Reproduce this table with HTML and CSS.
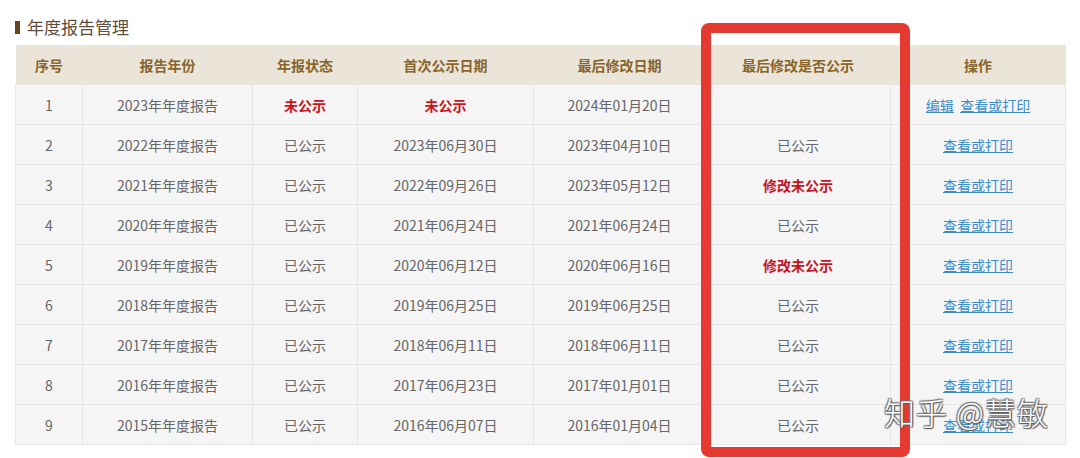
FILE: index.html
```html
<!DOCTYPE html>
<html lang="zh-CN">
<head>
<meta charset="utf-8">
<link rel="stylesheet" href="styles.css">
</head>
<body>
<div class="page">
  <h2 class="title"><span class="bar"></span>年度报告管理</h2>
  <table class="grid">
    <colgroup>
      <col style="width:67px"><col style="width:170px"><col style="width:105px"><col style="width:176px"><col style="width:172px"><col style="width:185px"><col style="width:175px">
    </colgroup>
    <thead>
      <tr><th>序号</th><th>报告年份</th><th>年报状态</th><th>首次公示日期</th><th>最后修改日期</th><th>最后修改是否公示</th><th>操作</th></tr>
    </thead>
    <tbody>
      <tr><td>1</td><td>2023年年度报告</td><td class="red">未公示</td><td class="red">未公示</td><td>2024年01月20日</td><td></td><td><a class="link">编辑</a>&nbsp; <a class="link">查看或打印</a></td></tr>
      <tr><td>2</td><td>2022年年度报告</td><td>已公示</td><td>2023年06月30日</td><td>2023年04月10日</td><td>已公示</td><td><a class="link">查看或打印</a></td></tr>
      <tr><td>3</td><td>2021年年度报告</td><td>已公示</td><td>2022年09月26日</td><td>2023年05月12日</td><td class="red">修改未公示</td><td><a class="link">查看或打印</a></td></tr>
      <tr><td>4</td><td>2020年年度报告</td><td>已公示</td><td>2021年06月24日</td><td>2021年06月24日</td><td>已公示</td><td><a class="link">查看或打印</a></td></tr>
      <tr><td>5</td><td>2019年年度报告</td><td>已公示</td><td>2020年06月12日</td><td>2020年06月16日</td><td class="red">修改未公示</td><td><a class="link">查看或打印</a></td></tr>
      <tr><td>6</td><td>2018年年度报告</td><td>已公示</td><td>2019年06月25日</td><td>2019年06月25日</td><td>已公示</td><td><a class="link">查看或打印</a></td></tr>
      <tr><td>7</td><td>2017年年度报告</td><td>已公示</td><td>2018年06月11日</td><td>2018年06月11日</td><td>已公示</td><td><a class="link">查看或打印</a></td></tr>
      <tr><td>8</td><td>2016年年度报告</td><td>已公示</td><td>2017年06月23日</td><td>2017年01月01日</td><td>已公示</td><td><a class="link">查看或打印</a></td></tr>
      <tr><td>9</td><td>2015年年度报告</td><td>已公示</td><td>2016年06月07日</td><td>2016年01月04日</td><td>已公示</td><td><a class="link">查看或打印</a></td></tr>
    </tbody>
  </table>
  <div class="highlight"></div>
  <div class="watermark">知乎 @慧敏</div>
</div>
</body>
</html>
```
FILE: styles.css
```css
html, body {
  margin: 0;
  padding: 0;
  background: #ffffff;
}
.page {
  position: relative;
  width: 1080px;
  height: 458px;
  overflow: hidden;
  padding: 16px 15px 0 15px;
  box-sizing: border-box;
  font-family: "Noto Sans CJK SC", "Noto Sans", sans-serif;
}
.title {
  display: flex;
  align-items: center;
  gap: 7px;
  margin: 0;
  height: 22px;
  font-size: 17px;
  font-weight: normal;
  color: #5e4c3c;
  line-height: 22px;
}
.bar {
  display: block;
  width: 5px;
  height: 13px;
  background: #6a4320;
}
.grid {
  margin-top: 7px;
  width: 1050px;
  border-collapse: collapse;
  table-layout: fixed;
  font-size: 14px;
}
.grid th {
  height: 40px;
  padding: 0;
  background: #ebe4d8;
  color: #87652c;
  font-weight: bold;
  text-align: center;
}
.grid td {
  height: 39px;
  padding: 0;
  background: #f5f5f5;
  color: #666666;
  text-align: center;
  border: 1px solid #e6e6e6;
  border-top-color: #e8e8e8;
}
.grid tbody tr:first-child td {
  border-top: none;
}
.grid td.red {
  color: #c8141e;
  font-weight: bold;
}
.link {
  color: #3d8cc9;
  text-decoration: underline;
  cursor: pointer;
}
.highlight {
  position: absolute;
  left: 701px;
  top: 23px;
  width: 209px;
  height: 434px;
  box-sizing: border-box;
  border: 10px solid #e53a31;
  border-radius: 8px;
}
.watermark {
  position: absolute;
  left: 884px;
  top: 392px;
  font-size: 31px;
  font-weight: 300;
  line-height: 40px;
  color: #ffffff;
  letter-spacing: 1px;
  text-shadow: 1px 1px 1px #555, -1px -1px 1px #777, 1px -1px 1px #777, -1px 1px 1px #777;
  white-space: pre;
}
```
